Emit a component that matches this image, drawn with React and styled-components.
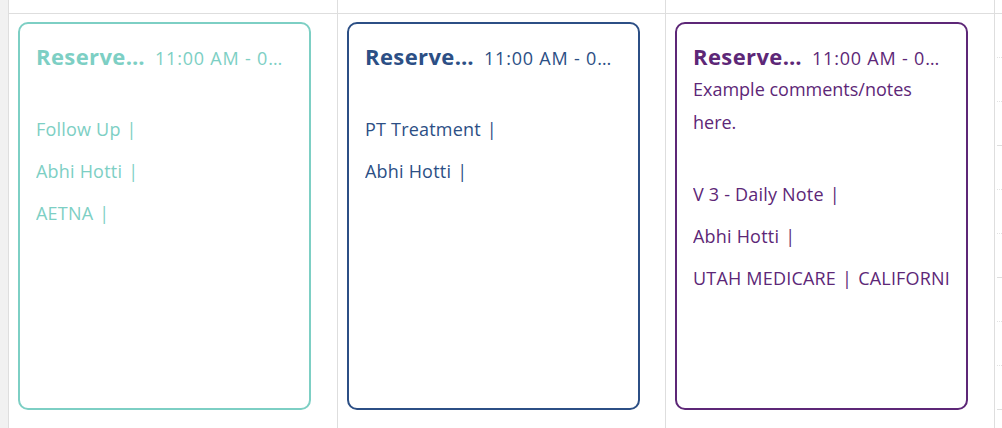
import React from "react";
import styled, { createGlobalStyle } from "styled-components";

const GlobalStyle = createGlobalStyle`
  html, body {
    margin: 0;
    padding: 0;
    background: #ffffff;
  }
  body {
    font-family: "Open Sans", "Liberation Sans", sans-serif;
  }
`;

const Board = styled.div`
  display: flex;
  width: 1002px;
  height: 428px;
  overflow: hidden;
  background: #ffffff;
`;

const Gutter = styled.div`
  width: 8px;
  flex: none;
  background: #f1f1f1;
`;

const DayColumn = styled.div`
  width: ${(p) => p.$width}px;
  flex: none;
  border-left: 1px solid #dedede;
  display: flex;
  flex-direction: column;
`;

const ColumnHead = styled.div`
  height: 13px;
  flex: none;
  border-bottom: 1px solid #dedede;
`;

const ColumnBody = styled.div`
  padding: 8px 0 0 9px;
`;

const SlotColumn = styled.div`
  flex: 1;
  border-left: 1px solid #dedede;
  display: flex;
  flex-direction: column;
`;

const Slot = styled.div`
  height: 43px;
  flex: none;
  margin-left: 2px;
  border-bottom: 1px ${(p) => (p.$hour ? "solid #dedede" : "dotted #e2e2e2")};
`;

const Card = styled.div`
  box-sizing: border-box;
  width: 293px;
  height: 388px;
  border: 2px solid ${(p) => p.$color};
  border-radius: 10px;
  padding: 15px 17px 0 16px;
  color: ${(p) => p.$color};
  overflow: hidden;
`;

const CardHead = styled.div`
  display: flex;
  align-items: baseline;
  gap: 5px;
  height: 34px;
  line-height: 34px;
`;

const Title = styled.span`
  flex: none;
  max-width: 114px;
  font-size: 22px;
  font-weight: 700;
  letter-spacing: 0.4px;
  white-space: nowrap;
  overflow: hidden;
  text-overflow: ellipsis;
`;

const Time = styled.span`
  flex: none;
  max-width: 130px;
  font-size: 18px;
  font-weight: 400;
  letter-spacing: 0.8px;
  white-space: nowrap;
  overflow: hidden;
  text-overflow: ellipsis;
`;

const Notes = styled.div`
  font-size: 18px;
  line-height: 32.5px;
  margin-bottom: 35px;
`;

const Item = styled.div`
  font-size: 18px;
  line-height: 42px;
  letter-spacing: 0.2px;
  white-space: nowrap;
  overflow: hidden;
`;

const Bar = styled.span`
  margin: 0 6px;
`;

const events = [
  {
    color: "#7dcfc4",
    title: "Reserved Slot",
    time: "11:00 AM - 04:00 PM",
    notes: [],
    items: [["Follow Up"], ["Abhi Hotti"], ["AETNA"]],
  },
  {
    color: "#2c4f85",
    title: "Reserved Slot",
    time: "11:00 AM - 04:00 PM",
    notes: [],
    items: [["PT Treatment"], ["Abhi Hotti"]],
  },
  {
    color: "#5d2777",
    title: "Reserved Slot",
    time: "11:00 AM - 04:00 PM",
    notes: ["Example comments/notes", "here."],
    items: [["V 3 - Daily Note"], ["Abhi Hotti"], ["UTAH MEDICARE", "CALIFORNIA MEDICAID"]],
  },
];

const widths = [328, 327, 328];

function EventCard({ event }) {
  return (
    <Card $color={event.color}>
      <CardHead>
        <Title>{event.title}</Title>
        <Time>{event.time}</Time>
      </CardHead>
      <Notes>
        {event.notes.map((line) => (
          <div key={line}>{line}</div>
        ))}
      </Notes>
      {event.items.map((parts, i) => (
        <Item key={i}>
          {parts.map((part, j) => (
            <React.Fragment key={j}>
              {part}
              <Bar>|</Bar>
            </React.Fragment>
          ))}
        </Item>
      ))}
    </Card>
  );
}

export default function App() {
  const slots = Array.from({ length: 12 }, (_, i) => i);
  return (
    <>
      <GlobalStyle />
      <Board>
        <Gutter />
        {events.map((event, i) => (
          <DayColumn key={i} $width={widths[i]}>
            <ColumnHead />
            <ColumnBody>
              <EventCard event={event} />
            </ColumnBody>
          </DayColumn>
        ))}
        <SlotColumn>
          <ColumnHead />
          {slots.map((i) => (
            <Slot key={i} $hour={i % 3 === 2} />
          ))}
        </SlotColumn>
      </Board>
    </>
  );
}
